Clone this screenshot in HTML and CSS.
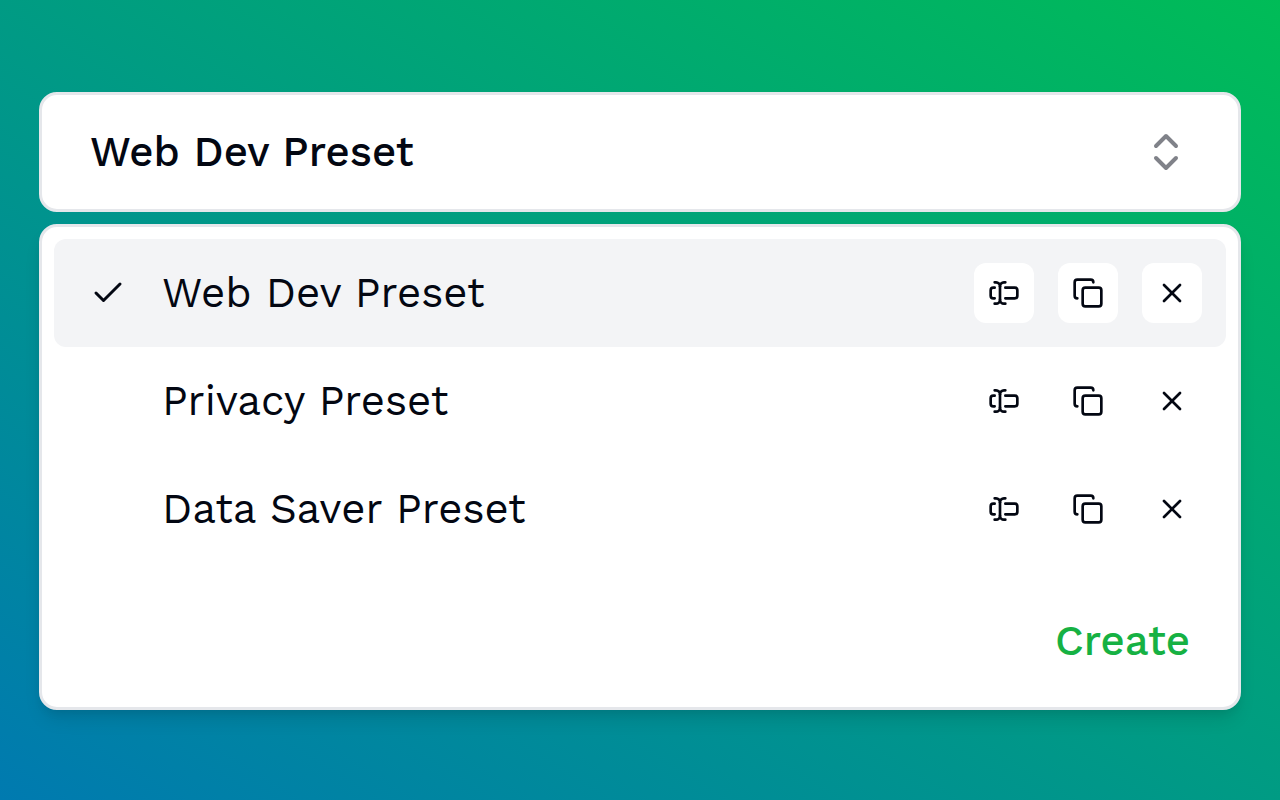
FILE: index.html
```html
<!DOCTYPE html>
<html lang="en">
<head>
    <meta charset="UTF-8">
    <meta name="viewport" content="width=device-width, initial-scale=1.0">
    <title>Presets</title>
    <link rel="stylesheet" href="styles.css">
</head>
<body>
    <!-- Shared icons -->
    <svg class="sprite" aria-hidden="true">
        <symbol id="icon-rename" viewBox="0 0 24 24">
            <path d="M5 4h1a3 3 0 0 1 3 3 3 3 0 0 1 3-3h1"/>
            <path d="M13 20h-1a3 3 0 0 1-3-3 3 3 0 0 1-3 3H5"/>
            <path d="M5 16H4a2 2 0 0 1-2-2v-4a2 2 0 0 1 2-2h1"/>
            <path d="M13 8h7a2 2 0 0 1 2 2v4a2 2 0 0 1-2 2h-7"/>
            <path d="M9 7v10"/>
        </symbol>
        <symbol id="icon-copy" viewBox="0 0 24 24">
            <rect x="8" y="8" width="14" height="14" rx="2"/>
            <path d="M4 16c-1.1 0-2-.9-2-2V4c0-1.1.9-2 2-2h10c1.1 0 2 .9 2 2"/>
        </symbol>
        <symbol id="icon-remove" viewBox="0 0 24 24">
            <path d="M18 6 6 18"/>
            <path d="m6 6 12 12"/>
        </symbol>
    </svg>

    <main class="container">
        <button type="button" class="trigger" aria-expanded="true" aria-controls="preset-menu">
            <span>Web Dev Preset</span>
            <svg class="chevrons" viewBox="0 0 24 24" aria-hidden="true">
                <path d="m7 15 5 5 5-5"/>
                <path d="m7 9 5-5 5 5"/>
            </svg>
        </button>

        <div class="menu" id="preset-menu">
            <ul class="preset-list">
                <li class="preset active">
                    <button type="button" class="preset-name">
                        <svg class="check" viewBox="0 0 24 24" aria-hidden="true"><path d="M20 6 9 17l-5-5"/></svg>
                        <span>Web Dev Preset</span>
                    </button>
                    <div class="actions">
                        <button type="button" class="action" aria-label="Rename"><svg><use href="#icon-rename"/></svg></button>
                        <button type="button" class="action" aria-label="Duplicate"><svg><use href="#icon-copy"/></svg></button>
                        <button type="button" class="action" aria-label="Delete"><svg><use href="#icon-remove"/></svg></button>
                    </div>
                </li>
                <li class="preset">
                    <button type="button" class="preset-name">
                        <span class="check"></span>
                        <span>Privacy Preset</span>
                    </button>
                    <div class="actions">
                        <button type="button" class="action" aria-label="Rename"><svg><use href="#icon-rename"/></svg></button>
                        <button type="button" class="action" aria-label="Duplicate"><svg><use href="#icon-copy"/></svg></button>
                        <button type="button" class="action" aria-label="Delete"><svg><use href="#icon-remove"/></svg></button>
                    </div>
                </li>
                <li class="preset">
                    <button type="button" class="preset-name">
                        <span class="check"></span>
                        <span>Data Saver Preset</span>
                    </button>
                    <div class="actions">
                        <button type="button" class="action" aria-label="Rename"><svg><use href="#icon-rename"/></svg></button>
                        <button type="button" class="action" aria-label="Duplicate"><svg><use href="#icon-copy"/></svg></button>
                        <button type="button" class="action" aria-label="Delete"><svg><use href="#icon-remove"/></svg></button>
                    </div>
                </li>
            </ul>
            <div class="menu-footer">
                <button type="button" class="create">Create</button>
            </div>
        </div>
    </main>
</body>
</html>
```

FILE: styles.css
```css
* {
    box-sizing: border-box;
}
body {
    margin: 0;
    padding-top: 2px;
    min-height: 100vh;
    display: flex;
    align-items: center;
    font-family: "Work Sans", Inter, sans-serif;
    font-size: 42px;
    line-height: 60px;
    color: #030712;
    background: linear-gradient(to top right, #007ab0, #00bc57);
}
button {
    margin: 0;
    padding: 0;
    border: none;
    background: none;
    color: inherit;
    font: inherit;
    text-align: left;
    cursor: pointer;
}
svg {
    fill: none;
    stroke: currentColor;
    stroke-width: 2;
    stroke-linecap: round;
    stroke-linejoin: round;
}
.sprite {
    position: absolute;
    width: 0;
    height: 0;
}
.container {
    flex: 1;
    display: flex;
    flex-direction: column;
    gap: 12px;
    padding: 0 39px;
}
.trigger {
    display: flex;
    align-items: center;
    justify-content: space-between;
    padding: 27px 48px;
    border: 3px solid #e5e7eb;
    border-radius: 18px;
    background-color: #fff;
    font-weight: 500;
}
.chevrons {
    width: 48px;
    height: 48px;
    color: #808289;
}
.menu {
    padding: 12px;
    border: 3px solid #e5e7eb;
    border-radius: 18px;
    background-color: #fff;
    box-shadow: 0 12px 18px -3px rgba(0, 0, 0, 0.1), 0 6px 12px -6px rgba(0, 0, 0, 0.1);
}
.preset-list {
    margin: 0;
    padding: 0;
    list-style: none;
}
.preset {
    display: flex;
    align-items: center;
    padding: 24px;
    border-radius: 12px;
}
.preset.active {
    background-color: #f3f4f6;
}
.preset-name {
    flex: 1;
    display: flex;
    align-items: center;
    gap: 36px;
    padding-left: 12px;
}
.check {
    width: 36px;
    height: 36px;
}
.actions {
    display: flex;
    gap: 24px;
}
.action {
    display: flex;
    align-items: center;
    justify-content: center;
    width: 60px;
    height: 60px;
    border-radius: 12px;
    background-color: #fff;
}
.action svg {
    width: 32px;
    height: 32px;
}
.menu-footer {
    display: flex;
    justify-content: flex-end;
    padding: 48px 36px 24px;
}
.create {
    color: #16b143;
    font-weight: 500;
}
```
